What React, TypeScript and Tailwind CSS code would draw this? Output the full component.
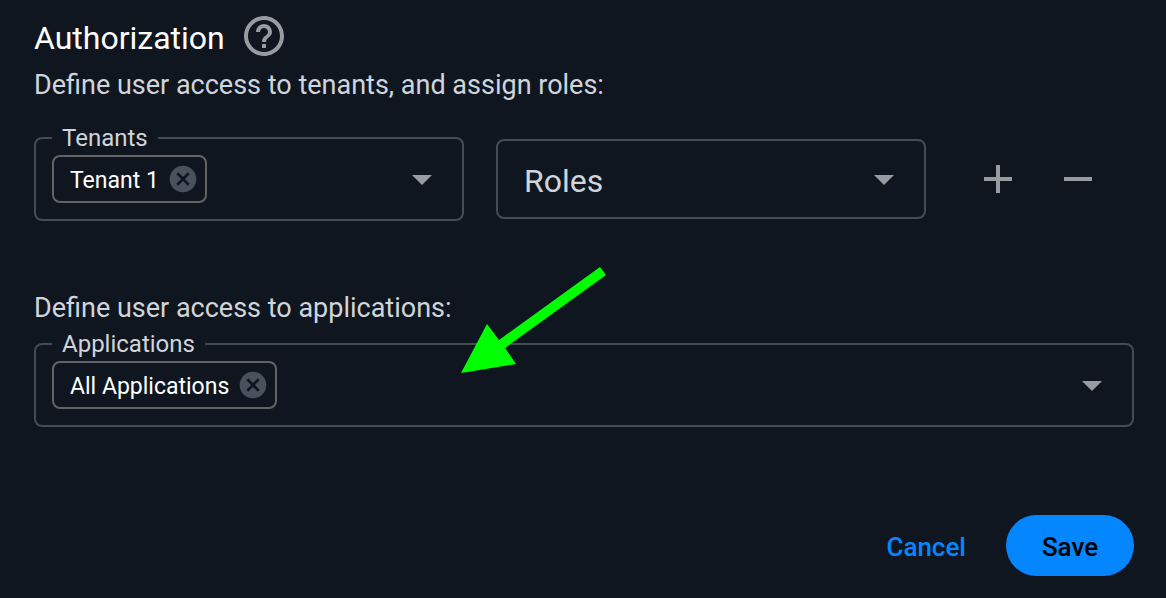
import React, { useState } from 'react';
import { MdAdd, MdArrowDropDown, MdCancel, MdHelpOutline, MdRemove } from 'react-icons/md';

interface ChipFieldProps {
    id: string;
    label: string;
    initial: string[];
}

/**
 * Outlined multi-value field: the label sits in the border,
 * the chosen values are removable chips.
 */
const ChipField = ({ id, label, initial }: ChipFieldProps) => {
    const [values, setValues] = useState(initial);

    return (
        <fieldset className="min-w-0 rounded-lg border-2 border-[#454b55] px-4 pt-[5px] pb-4">
            <legend className="px-[10px] text-2xl leading-6 text-[#cfd5da]">
                <label htmlFor={id}>{label}</label>
            </legend>
            <div className="flex h-12 items-center">
                {values.map((value) => (
                    <span
                        key={value}
                        className="flex h-12 shrink-0 items-center gap-2 rounded-lg border-2 border-[#636363] pr-[6px] pl-4 text-[23px] text-white"
                    >
                        <span className="pt-1">{value}</span>
                        <button
                            type="button"
                            aria-label={`Remove ${value}`}
                            onClick={() => setValues(values.filter((v) => v !== value))}
                        >
                            <MdCancel size={32} className="text-[#4a515c]" />
                        </button>
                    </span>
                ))}
                <input id={id} type="text" className="h-12 min-w-0 flex-1 bg-transparent px-2 text-[23px] text-white outline-none" />
                <button type="button" aria-label={`Open ${label}`}>
                    <MdArrowDropDown size={48} className="text-[#979ca0]" />
                </button>
            </div>
        </fieldset>
    );
};

export default function App() {
    return (
        <form
            className="min-h-screen bg-[#0f1620] pt-3 pr-8 pb-[22px] pl-[34px] font-['Roboto',sans-serif] text-[#cfd5da]"
            onSubmit={(e) => e.preventDefault()}
        >
            {/* Title */}
            <div className="flex h-12 items-center gap-[15px]">
                <h1 className="pt-1 text-[32px] leading-[48px] text-white">Authorization</h1>
                <button type="button" aria-label="Help">
                    <MdHelpOutline size={48} className="text-[#979ca0]" />
                </button>
            </div>

            {/* Tenants and roles */}
            <p className="mt-[7px] text-[27px] leading-9">Define user access to tenants, and assign roles:</p>
            <div className="mt-[23px] grid grid-cols-[1fr_1fr_auto] items-end gap-8">
                <ChipField id="tenants" label="Tenants" initial={['Tenant 1']} />
                <div className="relative mb-[2px] min-w-0">
                    <select
                        aria-label="Roles"
                        className="h-20 w-full appearance-none rounded-lg border-2 border-[#454b55] bg-[#0f1620] px-[26px] pt-1 text-[32px] text-[#cfd5da] outline-none"
                    >
                        <option>Roles</option>
                    </select>
                    <MdArrowDropDown size={48} className="pointer-events-none absolute top-4 right-[18px] text-[#979ca0]" />
                </div>
                <div className="mb-[2px] flex h-20 items-center pr-4">
                    <button type="button" aria-label="Add tenant" className="flex w-20 justify-center">
                        <MdAdd size={48} className="text-[#979ca0]" />
                    </button>
                    <button type="button" aria-label="Remove tenant" className="flex w-20 justify-center">
                        <MdRemove size={48} className="text-[#979ca0]" />
                    </button>
                </div>
            </div>

            {/* Applications */}
            <div className="relative mt-[69px]">
                <p className="text-[27px] leading-9">Define user access to applications:</p>
                <div className="mt-[6px] grid">
                    <ChipField id="applications" label="Applications" initial={['All Applications']} />
                </div>
                <svg
                    className="pointer-events-none absolute -top-[23px] left-[427px] h-[107px] w-[145px]"
                    viewBox="0 0 145 107"
                    fill="#00ff00"
                    aria-hidden="true"
                >
                    <path d="M0 106 26 57 38 73 139 0 145 8 44 81 55 97Z" />
                </svg>
            </div>

            {/* Actions */}
            <div className="mt-[88px] flex items-center justify-end gap-1">
                <button type="button" className="h-[61px] px-9 pt-1 text-[26px] font-medium text-[#0486ff]">
                    Cancel
                </button>
                <button type="submit" className="h-[61px] w-32 rounded-full bg-[#0486ff] pt-1 text-[26px] font-medium text-black">
                    Save
                </button>
            </div>
        </form>
    );
}
